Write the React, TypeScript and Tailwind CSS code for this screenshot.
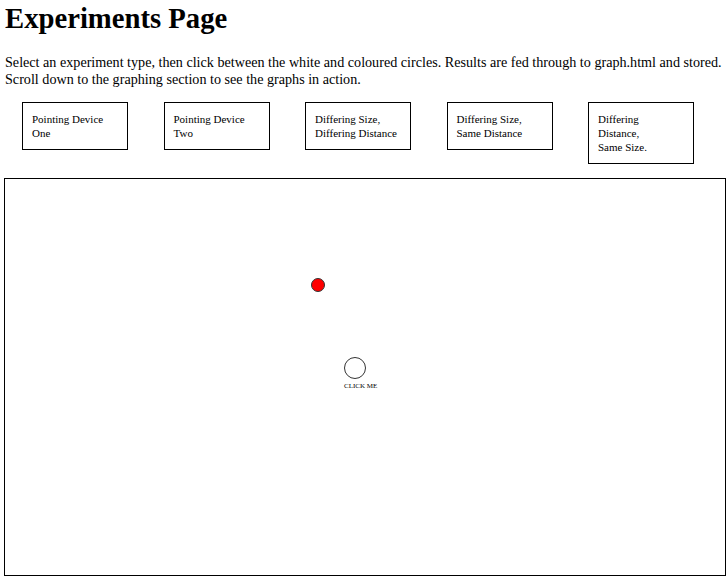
export default function App() {
  const experiments = [
    ["Pointing Device", "One"],
    ["Pointing Device", "Two"],
    ["Differing Size,", "Differing Distance"],
    ["Differing Size,", "Same Distance"],
    ["Differing", "Distance,", "Same Size."],
  ]

  return (
    <div className="min-h-screen bg-white text-black font-['Liberation_Serif',serif]">
      <div className="pl-[5px] pr-[2px] pt-[1px]">
        <h1 className="text-[28.7px] leading-[34px] font-bold">Experiments Page</h1>
        <p className="mt-[19px] text-[14.15px] leading-[17px]">
          Select an experiment type, then click between the white and coloured circles. Results are fed through to
          graph.html and stored. Scroll down to the graphing section to see the graphs in action.
        </p>
      </div>

      <div className="mt-[14px] ml-[22px] flex items-start gap-[35.5px]">
        {experiments.map((lines, i) => (
          <button
            key={i}
            className="w-[106px] border border-black px-[9px] py-[9px] text-left text-[11px] leading-[14px] cursor-pointer"
          >
            {lines.map((l, j) => (
              <div key={j}>{l}</div>
            ))}
          </button>
        ))}
      </div>

      <div className="relative mt-[14px] ml-[4px] h-[398px] w-[722px] border border-black">
        <div className="absolute left-[306px] top-[99px] h-[14px] w-[14px] rounded-full border border-[#333] bg-[#ff0000]" />
        <div className="absolute left-[339px] top-[178px] h-[22px] w-[22px] rounded-full border-[1.5px] border-[#333] bg-white" />
        <div className="absolute left-[339px] top-[203px] text-[7px] leading-[8px]">CLICK ME</div>
      </div>
    </div>
  )
}
